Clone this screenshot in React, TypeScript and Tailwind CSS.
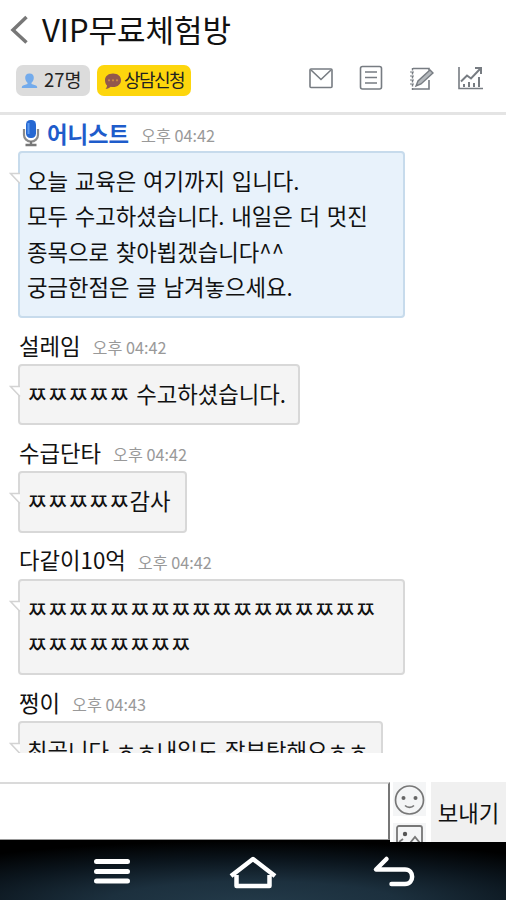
import type { ReactNode } from "react";

type Message = { name: string; time: string; lines: string[]; width: string; host?: boolean };

const messages: Message[] = [
  {
    name: "어니스트",
    time: "오후 04:42",
    lines: ["오늘 교육은 여기까지 입니다.", "모두 수고하셨습니다. 내일은 더 멋진", "종목으로 찾아뵙겠습니다^^", "궁금한점은 글 남겨놓으세요."],
    width: "w-[387px]",
    host: true,
  },
  { name: "설레임", time: "오후 04:42", lines: ["ㅉㅉㅉㅉㅉ 수고하셨습니다."], width: "w-[282px]" },
  { name: "수급단타", time: "오후 04:42", lines: ["ㅉㅉㅉㅉㅉ감사"], width: "w-[169px]" },
  { name: "다같이10억", time: "오후 04:42", lines: ["ㅉㅉㅉㅉㅉㅉㅉㅉㅉㅉㅉㅉㅉㅉㅉㅉㅉ", "ㅉㅉㅉㅉㅉㅉㅉㅉ"], width: "w-[387px]" },
  { name: "쩡이", time: "오후 04:43", lines: ["최곱니다 ㅎㅎ내일도 잘부탁해요ㅎㅎ"], width: "w-[365px]" },
];

function Icon({ children }: { children: ReactNode }) {
  return (
    <svg width="26" height="26" viewBox="0 0 26 26" fill="none" stroke="#777c82" strokeWidth="1.6">
      {children}
    </svg>
  );
}

function Mic() {
  return (
    <svg width="18" height="28" viewBox="0 0 18 28" className="mr-[7px] shrink-0">
      <path d="M2 10v6a7 6.5 0 0 0 14 0v-6" fill="none" stroke="#8b8b8b" strokeWidth="2.2" />
      <path d="M9 22v4M3.500 26h11" stroke="#777" strokeWidth="2.4" />
      <rect x="4" y="1" width="10" height="18" rx="4.5" fill="#2668d2" />
      <path d="M6.500 4v11" stroke="#5d9af0" strokeWidth="2" />
    </svg>
  );
}

function ChatMessage({ m, first }: { m: Message; first: boolean }) {
  return (
    <div className="shrink-0">
      <div className={`flex items-center pl-[19px] ${first ? "h-[36px] pb-[1px]" : "h-[46px] pt-[7px]"}`}>
        {m.host && <span className="ml-[3px] flex"><Mic /></span>}
        <span className={m.host ? "text-[22.3px] font-bold leading-[30px] text-[#1e5ccb]" : "text-[22.3px] leading-[30px] text-[#111]"}>{m.name}</span>
        <span className="ml-[12px] pt-[5px] text-[16.2px] leading-[24px] text-[#999]">{m.time}</span>
      </div>
      <div
        className={`relative ml-[18px] rounded-[4px] border-2 pt-[10px] pb-[12px] pl-[7px] text-[22.3px] leading-[35.3px] text-[#111] ${m.width} ${
          m.host ? "border-[#c7dbec] bg-[#e8f2fb]" : "border-[#d8d8d8] bg-[#f4f4f4]"
        }`}
      >
        <svg width="13" height="15" viewBox="0 0 13 15" className="absolute -left-[11px] top-[19px]">
          <path d="M11 1.500H1.500L11 11.500" fill="#fff" stroke="#d3d3d3" strokeWidth="1.6" />
        </svg>
        {m.lines.map((l) => (
          <div key={l} className="[word-spacing:1.7px]">{l}</div>
        ))}
      </div>
    </div>
  );
}

export default function App() {
  return (
    <div className="flex h-[900px] w-[506px] flex-col overflow-hidden whitespace-nowrap bg-white font-['Noto_Sans_CJK_KR','Noto_Sans',sans-serif]">
      <header className="flex h-[115px] shrink-0 flex-col border-b-[3px] border-[#e4e4e4]">
        <div className="flex h-[60px] items-center pl-[10px]">
          <svg width="19" height="30" viewBox="0 0 19 30" fill="none" stroke="#777" strokeWidth="3.5">
            <path d="M16.500 2L3 15l13.500 12.500" />
          </svg>
          <h1 className="-mt-[3px] ml-[13px] text-[31px] leading-[44px] text-[#111]">VIP무료체험방</h1>
        </div>
        <div className="flex items-center pl-[16px] pt-[5px]">
          <div className="flex h-[31px] w-[74px] items-center rounded-[7px] bg-[#dcdcdc] pl-[5px]">
            <svg width="17" height="17" viewBox="0 0 17 17" fill="#73abec">
              <path d="M8.500 1.500c-3 0-4.500 2-4.300 4.500.2 2.500 1.300 4 2.300 4.800v1.200L2 13.500C1 14 .8 15 .8 16h15.400c0-1-.2-2-1.200-2.500L10.500 12v-1.200c1-.8 2.100-2.300 2.300-4.800.2-2.500-1.300-4.500-4.300-4.500z" />
            </svg>
            <span className="-mt-[4px] ml-[6px] text-[18.500px] leading-[26px] text-[#222]">27명</span>
          </div>
          <div className="ml-[7px] flex h-[31px] w-[94px] items-center rounded-[7px] bg-[#fdd60d] pl-[7px]">
            <svg width="18" height="18" viewBox="0 0 18 18">
              <path d="M9 1.500c4.800 0 8 2.800 8 6.700s-3.200 6.800-8 6.800c-.8 0-1.500-.1-2.200-.2C5.500 16 3.800 17 1.500 17c1-1 1.500-2.300 1.500-3.500C1.700 12.200 1 10.300 1 8.200c0-3.900 3.200-6.700 8-6.700z" fill="#92584c" />
              <g fill="#c98a42"><circle cx="5" cy="8.300" r="1.100" /><circle cx="9" cy="8.300" r="1.100" /><circle cx="13" cy="8.300" r="1.100" /></g>
            </svg>
            <span className="-mt-[4px] ml-[2px] text-[18px] leading-[26px] tracking-[-1.600px] text-[#222]">상담신청</span>
          </div>
          <div className="-mt-[6px] ml-[117px] flex gap-[24px]">
            <Icon><rect x="2" y="4" width="22" height="18.500" rx="1" /><path d="M3 5l10 9.500L23 5" /></Icon>
            <Icon><rect x="2.500" y="1.500" width="21" height="22.500" rx="2" /><path d="M7 7h12M7 12.500h12M7 18h12" /></Icon>
            <Icon>
              <path d="M5 3.500h16v2M5 24h16v-9" />
              <path d="M4.500 3v22" strokeWidth="1.400" strokeDasharray="2.500 1.500" />
              <path d="M2 7h4M2 11h4M2 15h4M2 19h4" strokeWidth="1.200" />
              <path d="M8 21l2-5L22 5l3 3L13 19z" fill="#b4b8bc" strokeWidth="1.400" />
            </Icon>
            <Icon>
              <path d="M1 2v21.500h24" />
              <path d="M3 16.500l6-6 4 3L22 4M17 3h6v6" strokeWidth="2" />
              <path d="M6 22v-3M11 22v-5M16 22v-4M21 22V12" strokeWidth="2" />
            </Icon>
          </div>
        </div>
      </header>

      <main className="h-[638px] shrink-0 overflow-hidden">
        {messages.map((m, i) => (
          <ChatMessage key={m.name} m={m} first={i === 0} />
        ))}
      </main>

      <div className="mt-[29px] flex h-[60px] shrink-0 bg-black">
        <div className="h-[58px] w-[390px] border-b border-r-2 border-t-2 border-b-[#999] border-r-[#777] border-t-[#dadada] bg-white" />
        <div className="flex h-[60px] w-[41px] flex-col items-center gap-[7px] overflow-hidden bg-white">
          <svg width="33" height="34" viewBox="0 0 33 34" fill="none" stroke="#777" strokeWidth="1.700" className="-ml-[2px] shrink-0 bg-[#f4f5f6]">
            <circle cx="16.500" cy="18" r="14" />
            <path d="M12 23.500c2.500 2.500 6.500 2.500 9 0" />
            <g fill="#666" stroke="none"><circle cx="10.500" cy="16" r="2" /><circle cx="22.500" cy="16" r="2" /></g>
          </svg>
          <svg width="33" height="34" viewBox="0 0 33 34" fill="none" stroke="#777" strokeWidth="1.800" className="-ml-[2px] shrink-0 bg-[#f4f5f6]">
            <rect x="4" y="3" width="25" height="26" rx="2" />
            <circle cx="12" cy="11" r="2.200" fill="#555" stroke="none" />
            <path d="M6 19l4-3M17 20l5-6 5 6" />
          </svg>
        </div>
        <button className="h-[60px] w-[75px] bg-[#f0f0f0] text-[22.300px] leading-[58px] text-[#111]">보내기</button>
      </div>

      <nav className="h-[58px] shrink-0 bg-[radial-gradient(ellipse_420px_62px_at_50%_105%,#233a49,#1c303e_35%,#0b151d_70%,#000_100%)]">
        <svg width="506" height="58" viewBox="0 1 506 58" fill="none" stroke="#fff">
          <path d="M96.500 20.500h31M96.500 30.500h31M96.500 40h31" strokeWidth="5" strokeLinecap="round" />
          <path d="M231 35l22-17 22 17M236.500 34v11h33V34" strokeWidth="4.500" strokeLinejoin="round" />
          <path d="M386.500 18l-10.500 10.500h29c9.500 0 9.500 14.500 0 14.500h-13.500" strokeWidth="4.500" strokeLinecap="round" strokeLinejoin="round" />
        </svg>
      </nav>
    </div>
  );
}
